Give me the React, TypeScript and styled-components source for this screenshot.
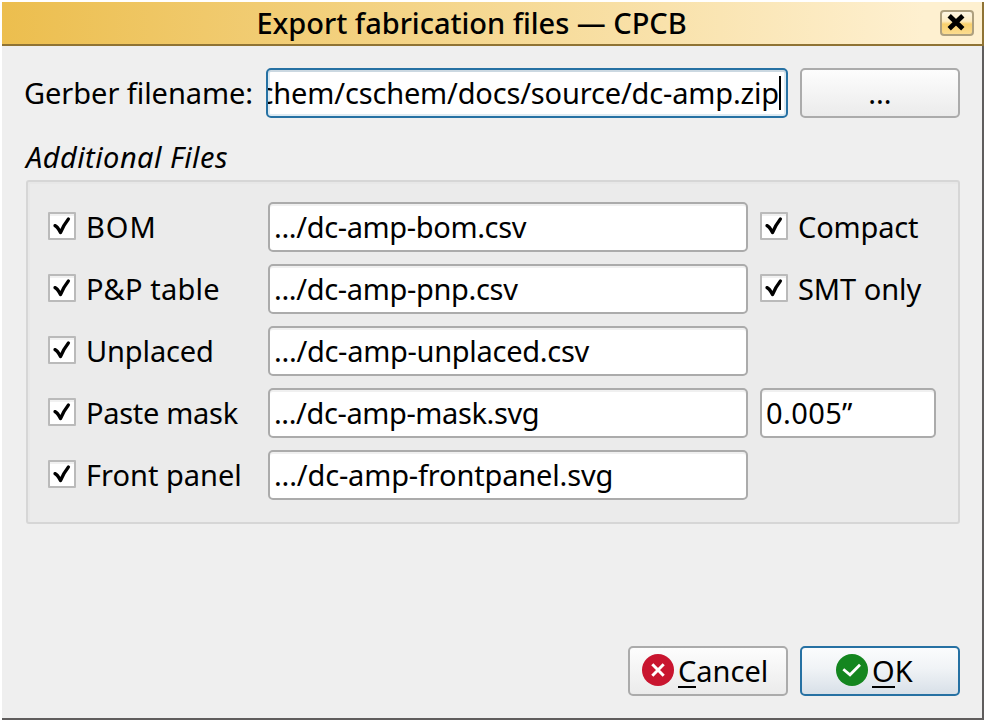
import React from "react";
import styled, { createGlobalStyle, css } from "styled-components";

const GlobalStyle = createGlobalStyle`
  * { box-sizing: border-box; }
  body {
    margin: 0;
    background: #fff;
    color: #000;
    font: 29px/40px "Noto Sans", "Open Sans", sans-serif;
    overflow: hidden;
  }
`;

const Dialog = styled.main`
  width: 984px;
  height: 720px;
  padding: 2px 0 0 2px;
  display: flex;
  flex-direction: column;
`;

const TitleBar = styled.header`
  height: 44px;
  flex: none;
  display: flex;
  align-items: center;
  padding-right: 8px;
  border-right: 2px solid #8f7334;
  border-bottom: 2px solid #8f7334;
  background: linear-gradient(90deg, #ecbe4e 0%, #fef0d0 94%, #fef0d0 100%);
`;

const Title = styled.h1<{ $spacing: number }>`
  flex: 1;
  margin: 0;
  padding-left: 254.5px;
  font-size: 29px;
  font-weight: 500;
  line-height: 42px;
  letter-spacing: ${(p) => p.$spacing}px;
  white-space: pre;
`;

const CloseButton = styled.button`
  width: 34px;
  height: 26px;
  padding: 0;
  display: flex;
  justify-content: center;
  align-items: center;
  border: 2px solid #aea07f;
  border-radius: 4px;
  background: linear-gradient(#fdf6e4 0%, #fdebc0 42%, #f9d06c 55%, #fbdc90 100%);
`;

const Body = styled.section`
  flex: 1;
  display: flex;
  flex-direction: column;
  padding: 22px 22px 22px 24px;
  background: #efefef;
  border-right: 2px solid #5f5d5d;
  border-bottom: 2px solid #5f5d5d;
`;

const FileRow = styled.div`
  display: grid;
  grid-template-columns: 228px 522px 160px;
  column-gap: 12px;
  height: 50px;
  align-items: center;
`;

const Label = styled.span<{ $spacing?: number; $shift?: number }>`
  letter-spacing: ${(p) => p.$spacing ?? 0}px;
  margin-left: ${(p) => p.$shift ?? 0}px;
  white-space: pre;
`;

const Field = styled.div<{ $width: number; $spacing?: number; $focused?: boolean }>`
  width: ${(p) => p.$width}px;
  height: 50px;
  display: flex;
  align-items: center;
  padding-left: 4px;
  border: 2px solid #ababab;
  border-radius: 5px;
  background: #fff;
  box-shadow: inset 0 2px 0 #f0f0f0;
  letter-spacing: ${(p) => p.$spacing ?? 0}px;
  white-space: pre;
  overflow: hidden;
  ${(p) =>
    p.$focused &&
    css`
      justify-content: flex-end;
      padding: 0 5px 0 0;
      border-color: #2671a3;
      box-shadow: inset 0 2px 0 #cbd8e1, inset 0 -2px 0 #deebf3, inset 2px 0 0 #deebf3,
        inset -2px 0 0 #deebf3;
    `}
`;

const Caret = styled.i`
  width: 2px;
  height: 34px;
  flex: none;
  background: #000;
`;

const PushButton = styled.button<{ $primary?: boolean; $indent?: number }>`
  width: 160px;
  height: 50px;
  padding: 0 0 0 ${(p) => p.$indent ?? 0}px;
  display: flex;
  align-items: center;
  justify-content: ${(p) => (p.$indent ? "flex-start" : "center")};
  gap: 4px;
  border: 2px solid ${(p) => (p.$primary ? "#2671a3" : "#ababab")};
  border-radius: 5px;
  background: ${(p) =>
    p.$primary
      ? "linear-gradient(#fbfcfd 0%, #f0f3f6 45%, #d8e0e8 100%)"
      : "linear-gradient(#fdfdfd 0%, #f5f5f5 45%, #ebebeb 100%)"};
  color: #000;
  font: inherit;
`;

const GroupTitle = styled.h2<{ $spacing: number }>`
  margin: 19px 0 3px;
  font-size: 29px;
  line-height: 40px;
  font-weight: 400;
  font-style: italic;
  letter-spacing: ${(p) => p.$spacing}px;
`;

const Group = styled.div`
  width: 934px;
  height: 344px;
  padding: 20px;
  display: flex;
  flex-direction: column;
  gap: 12px;
  border: 2px solid #d6d6d6;
  border-radius: 3px;
  background: #ebebeb;
  box-shadow: inset 0 2px 0 #e7e7e7, inset 2px 0 0 #e8e8e8;
`;

const OptionRow = styled.div`
  display: grid;
  grid-template-columns: 208px 480px 176px;
  column-gap: 12px;
  height: 50px;
  align-items: center;
`;

const Option = styled.label`
  display: flex;
  align-items: center;
  gap: 10px;
`;

const Box = styled.span`
  width: 28px;
  height: 28px;
  flex: none;
  margin-bottom: 2px;
  display: flex;
  border: 2px solid #bababa;
  border-radius: 1px;
  background: #fff;
  box-shadow: inset 0 2px 0 #f1f1f1;
`;

const Actions = styled.footer`
  margin-top: auto;
  display: flex;
  justify-content: flex-end;
  gap: 12px;
`;

const ActionIcon = styled.svg`
  width: 32px;
  height: 32px;
  flex: none;
  margin-bottom: 2px;
`;

const Mnemonic = styled.span`
  height: 37px;
  border-bottom: 2px solid #000;
`;

const ActionText = styled.span<{ $spacing?: number }>`
  height: 40px;
  display: flex;
  align-items: flex-start;
  line-height: 40px;
  letter-spacing: ${(p) => p.$spacing ?? 0}px;
`;

const Checkbox = () => (
  <Box>
    <svg width="24" height="24" viewBox="0 0 24 24" fill="none">
      <path d="M5 11.6Q7.6 12.6 10.5 18.6Q13.6 11 18.4 5" stroke="#000" strokeWidth="3.3" strokeLinecap="round" strokeLinejoin="round" />
    </svg>
  </Box>
);

const CloseIcon = () => (
  <svg width="20" height="20" viewBox="0 0 20 20">
    <path d="M2.2 2.8L15.8 15.8M15.8 2.8L2.2 15.8" stroke="#000" strokeWidth="4.8" />
  </svg>
);

const CancelIcon = () => (
  <ActionIcon viewBox="0 0 32 32">
    <circle cx="16" cy="16" r="16" fill="#c9152f" />
    <path d="M10.3 10.3L21.7 21.7M21.7 10.3L10.3 21.7" stroke="#fff" strokeWidth="3" />
  </ActionIcon>
);

const OkIcon = () => (
  <ActionIcon viewBox="0 0 32 32" fill="none">
    <circle cx="16" cy="16" r="16" fill="#14861f" />
    <path d="M7.3 15.2L14 20.8L24 10.8" stroke="#fff" strokeWidth="2.8" />
  </ActionIcon>
);

interface Entry {
  label: string;
  spacing: number;
  file: string;
  fileSpacing: number;
  extra?: { label: string; spacing: number };
  thickness?: string;
}

const entries: Entry[] = [
  { label: "BOM", spacing: 1, file: ".../dc-amp-bom.csv", fileSpacing: -0.36, extra: { label: "Compact", spacing: -0.17 } },
  { label: "P&P table", spacing: 0.2, file: ".../dc-amp-pnp.csv", fileSpacing: -0.34, extra: { label: "SMT only", spacing: -0.05 } },
  { label: "Unplaced", spacing: -0.14, file: ".../dc-amp-unplaced.csv", fileSpacing: -0.29 },
  { label: "Paste mask", spacing: -0.3, file: ".../dc-amp-mask.svg", fileSpacing: -0.4, thickness: "0.005”" },
  { label: "Front panel", spacing: 0, file: ".../dc-amp-frontpanel.svg", fileSpacing: -0.16 },
];

export default function App() {
  return (
    <>
      <GlobalStyle />
      <Dialog>
        <TitleBar>
          <Title $spacing={-0.03}>Export fabrication files — CPCB</Title>
          <CloseButton aria-label="Close">
            <CloseIcon />
          </CloseButton>
        </TitleBar>
        <Body>
          <FileRow>
            <Label $shift={-2} $spacing={-0.05}>Gerber filename:</Label>
            <Field $width={522} $spacing={-0.16} $focused>
              chem/cschem/docs/source/dc-amp.zip
              <Caret />
            </Field>
            <PushButton>...</PushButton>
          </FileRow>
          <GroupTitle $spacing={0.44}>Additional Files</GroupTitle>
          <Group>
            {entries.map((e) => (
              <OptionRow key={e.label}>
                <Option>
                  <Checkbox />
                  <Label $spacing={e.spacing}>{e.label}</Label>
                </Option>
                <Field $width={480} $spacing={e.fileSpacing}>{e.file}</Field>
                {e.extra && (
                  <Option>
                    <Checkbox />
                    <Label $spacing={e.extra.spacing}>{e.extra.label}</Label>
                  </Option>
                )}
                {e.thickness && <Field $width={176} $spacing={0.4}>{e.thickness}</Field>}
              </OptionRow>
            ))}
          </Group>
          <Actions>
            <PushButton $indent={12}>
              <CancelIcon />
              <ActionText><Mnemonic>C</Mnemonic>ancel</ActionText>
            </PushButton>
            <PushButton $primary $indent={34}>
              <OkIcon />
              <ActionText><Mnemonic>O</Mnemonic>K</ActionText>
            </PushButton>
          </Actions>
        </Body>
      </Dialog>
    </>
  );
}
